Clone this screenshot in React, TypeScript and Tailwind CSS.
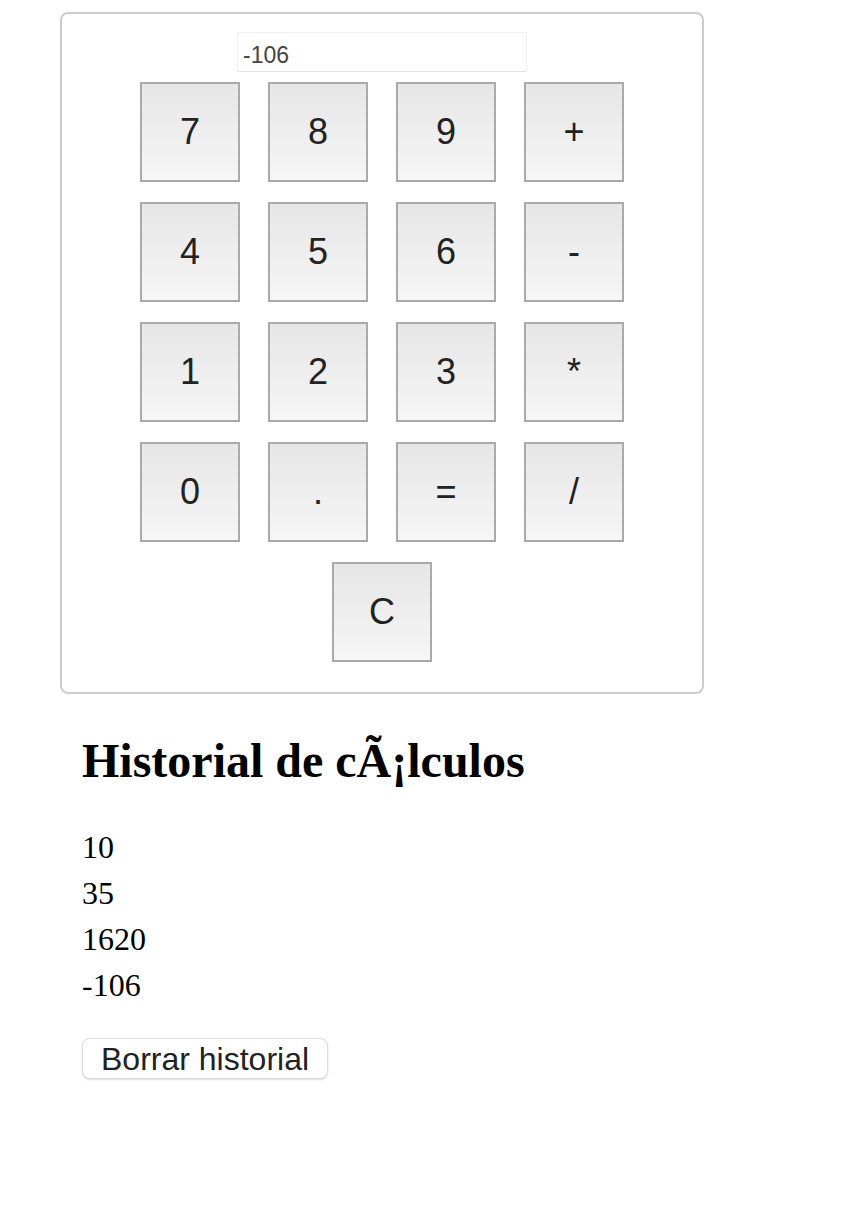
import { useState } from "react"

const keys = ["7", "8", "9", "+", "4", "5", "6", "-", "1", "2", "3", "*", "0", ".", "=", "/"]

export default function App() {
  const [display, setDisplay] = useState("-106")
  const [history, setHistory] = useState<string[]>(["10", "35", "1620", "-106"])

  const press = (k: string) => {
    if (k === "=") {
      try {
        // eslint-disable-next-line no-new-func
        const result = String(Function(`"use strict";return (${display})`)())
        setDisplay(result)
        setHistory(prev => [...prev, result])
      } catch { setDisplay("Error") }
      return
    }
    if (k === "C") { setDisplay(""); return }
    setDisplay(prev => prev + k)
  }

  const keyClass = "w-[100px] h-[100px] border-2 border-[#aaa] bg-gradient-to-b from-[#e6e6e6] to-[#f6f6f6] text-[36px] text-[#222] flex items-center justify-center font-['Liberation_Sans',Arial,sans-serif]"

  return (
    <div className="min-h-[1206px] bg-white">
      <div className="ml-[60px] mt-[12px] w-[644px] border-2 border-[#ccc] rounded-[8px] pt-[18px] pb-[30px] flex flex-col items-center">
        <input
          value={display}
          onChange={e => setDisplay(e.target.value)}
          className="w-[290px] h-[40px] px-[5px] pt-[6px] pb-0 border border-[#f0f0f0] border-b-[#e4e4e4] text-[23px] text-[#444] outline-none font-['Liberation_Sans',Arial,sans-serif]"
        />
        <div className="mt-[10px] grid grid-cols-4 gap-x-[28px] gap-y-[20px]">
          {keys.map(k => (
            <button key={k} onClick={() => press(k)} className={keyClass}>{k}</button>
          ))}
        </div>
        <button onClick={() => press("C")} className={keyClass + " mt-[20px]"}>C</button>
      </div>

      <div className="px-[82px] font-['Liberation_Serif','Times_New_Roman',serif] text-black">
        <h2 className="mt-[40px] text-[48px] font-bold leading-[54px]">Historial de cÃ¡lculos</h2>
        <div className="mt-[36px] text-[32px] leading-[46px]">
          {history.map((h, i) => <div key={i}>{h}</div>)}
        </div>
        <button onClick={() => setHistory([])}
          className="mt-[30px] h-[41px] px-[18px] border border-[#ddd] rounded-[8px] bg-white shadow-[0_1px_2px_rgba(0,0,0,0.15)] text-[32px] leading-[38px] text-[#222] font-['Liberation_Sans',Arial,sans-serif]">
          Borrar historial
        </button>
      </div>
    </div>
  )
}
